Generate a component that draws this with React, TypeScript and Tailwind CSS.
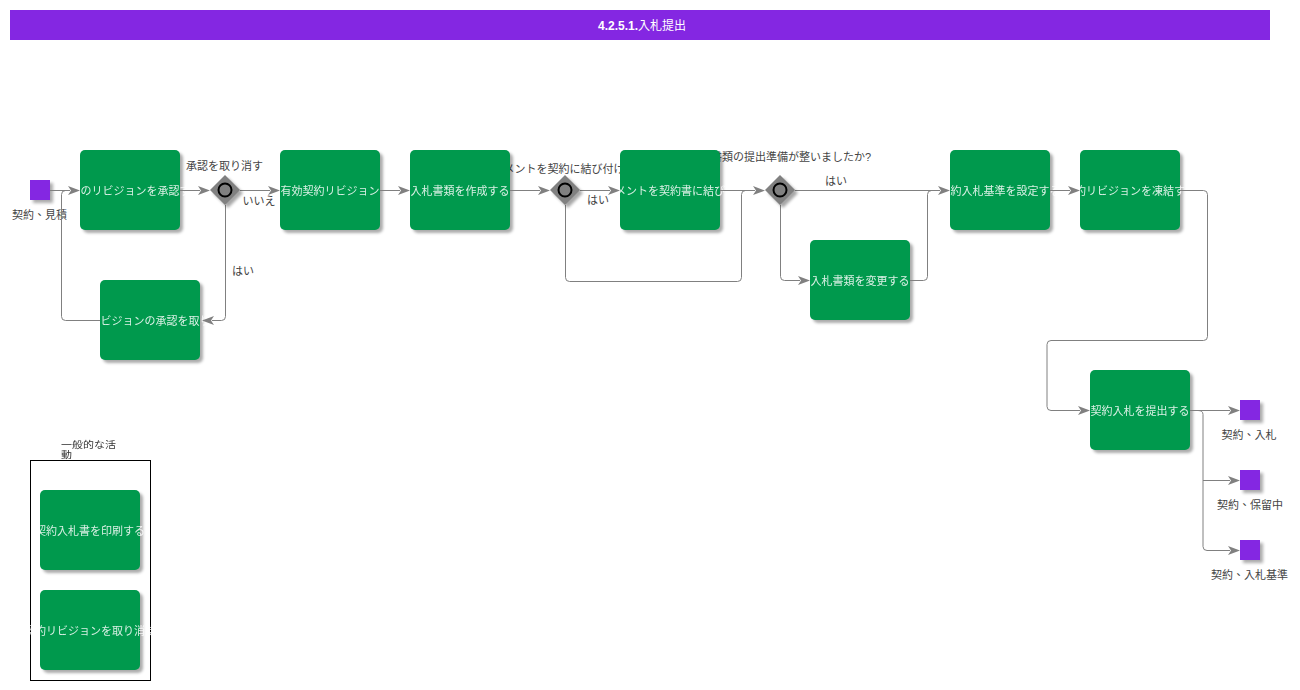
const font = "[font-family:'Liberation_Sans','Noto_Sans_CJK_JP',sans-serif]";
const fontTc = "[font-family:'Liberation_Sans','Noto_Sans_CJK_TC',sans-serif]";

const boxes = [
  { pos: "left-[80px] top-[150px]", text: "契約のリビジョンを承認する" },
  { pos: "left-[280px] top-[150px]", text: "有効契約リビジョン" },
  { pos: "left-[410px] top-[150px]", text: "入札書類を作成する" },
  { pos: "left-[620px] top-[150px]", text: "ドキュメントを契約書に結び付ける" },
  { pos: "left-[950px] top-[150px]", text: "契約入札基準を設定する" },
  { pos: "left-[1080px] top-[150px]", text: "契約リビジョンを凍結する" },
  { pos: "left-[100px] top-[280px]", text: "契約リビジョンの承認を取り消す" },
  { pos: "left-[810px] top-[240px]", text: "入札書類を変更する" },
  { pos: "left-[1090px] top-[370px]", text: "契約入札を提出する" },
  { pos: "left-[40px] top-[490px]", text: "契約入札書を印刷する" },
  { pos: "left-[40px] top-[590px]", text: "契約リビジョンを取り消す" },
];

const labels = [
  { pos: "left-[224.5px] top-[166px]", text: "承認を取り消す", cls: font },
  { pos: "left-[259px] top-[201px]", text: "いいえ", cls: font },
  { pos: "left-[243px] top-[271px]", text: "はい", cls: font },
  { pos: "left-[567px] top-[169px]", text: "ドキュメントを契約に結び付けますか?", cls: font },
  { pos: "left-[598px] top-[200px]", text: "はい", cls: font },
  { pos: "left-[780px] top-[157px]", text: "入札書類の提出準備が整いましたか?", cls: font },
  { pos: "left-[836px] top-[181px]", text: "はい", cls: font },
  { pos: "left-[39.5px] top-[215px]", text: "契約、見積", cls: fontTc },
  { pos: "left-[1249px] top-[435px]", text: "契約、入札", cls: fontTc },
  { pos: "left-[1250px] top-[505px]", text: "契約、保留中", cls: fontTc },
  { pos: "left-[1249.5px] top-[575px]", text: "契約、入札基準", cls: fontTc },
];

const squares = [
  "left-[30px] top-[180px]",
  "left-[1240px] top-[400px]",
  "left-[1240px] top-[470px]",
  "left-[1240px] top-[540px]",
];

const lines = [
  "M50 190.5H70",
  "M180 190.5H200",
  "M240 190.5H270",
  "M225.5 205V316.5Q225.5 320.5 221.5 320.5H212",
  "M100 320.5H65.5Q61.5 320.5 61.5 316.5V194.5Q61.5 190.5 65.5 190.5H70",
  "M380 190.5H400",
  "M510 190.5H540",
  "M580 190.5H610",
  "M720 190.5H755",
  "M565.5 205V277.5Q565.5 281.5 569.5 281.5H737.5Q741.5 281.5 741.5 277.5V194.5Q741.5 190.5 745.5 190.5H755",
  "M795 190.5H940",
  "M780.5 205V276.5Q780.5 280.5 784.5 280.5H800",
  "M910 280.5H923.5Q927.5 280.5 927.5 276.5V194.5Q927.5 190.5 931.5 190.5H940",
  "M1050 190.5H1070",
  "M1180 190.5H1203.5Q1207.5 190.5 1207.5 194.5V336.5Q1207.5 340.5 1203.5 340.5H1051Q1047 340.5 1047 344.5V406.5Q1047 410.5 1051 410.5H1080",
  "M1190 410.5H1230",
  "M1198 410.5Q1203 410.5 1203 414.5V546.5Q1203 550.5 1207 550.5H1230",
  "M1203 480.5H1230",
];

const heads: [number, number, number][] = [
  [80, 190.5, 1], [210, 190.5, 1], [280, 190.5, 1], [202, 320.5, -1], [410, 190.5, 1],
  [550, 190.5, 1], [620, 190.5, 1], [765, 190.5, 1], [950, 190.5, 1], [810, 280.5, 1],
  [1080, 190.5, 1], [1090, 410.5, 1], [1240, 410.5, 1], [1240, 480.5, 1], [1240, 550.5, 1],
];

const gateways = [225, 565, 780];

function Diagram() {
  return (
    <svg className="absolute left-0 top-0 h-[690px] w-[1300px]" viewBox="0 0 1300 690" fill="none">
      <defs>
        <filter id="blur" x="-30%" y="-30%" width="160%" height="160%">
          <feGaussianBlur stdDeviation="1.5" />
        </filter>
      </defs>
      {lines.map((d) => (
        <path key={d} d={d} stroke="#808080" strokeWidth="1" />
      ))}
      {heads.map(([x, y, dir]) => (
        <path
          key={`${x}-${y}`}
          d={`M${x} ${y}L${x - 12 * dir} ${y - 4.5}L${x - 9 * dir} ${y}L${x - 12 * dir} ${y + 4.5}Z`}
          fill="#808080"
        />
      ))}
      {gateways.map((x) => (
        <g key={x}>
          <path d={`M${x + 3} 178L${x + 18} 193L${x + 3} 208L${x - 12} 193Z`} fill="#000" opacity="0.35" filter="url(#blur)" />
          <path d={`M${x} 175L${x + 15} 190L${x} 205L${x - 15} 190Z`} fill="#808080" />
          <circle cx={x} cy="190" r="6.5" fill="#808080" stroke="#000" strokeWidth="2" />
        </g>
      ))}
    </svg>
  );
}

export default function App() {
  return (
    <div className={`relative h-[690px] w-[1300px] overflow-hidden bg-white pt-[10px] pl-[10px] ${font}`}>
      <div className="flex h-[30px] w-[1260px] items-center justify-center bg-[#8427e2] pl-[4px] pt-[2px] text-[12px] font-bold text-white">
        4.2.5.1.<span className="font-normal">入札提出</span>
      </div>

      {labels.map((l) => (
        <div
          key={l.pos}
          className={`absolute ${l.pos} ${l.cls} -translate-x-1/2 -translate-y-1/2 whitespace-nowrap text-[11px] leading-[14px] text-[#444444]`}
        >
          {l.text}
        </div>
      ))}

      <div className="absolute left-[30px] top-[460px] h-[221px] w-[121px] border border-black" />
      <div className="absolute left-[61px] top-[439px] w-[58px] text-[11px] leading-[11px] text-[#333333] [transform:scaleY(0.85)]">
        一般的な活動
      </div>

      {boxes.map((b) => (
        <div
          key={b.pos}
          className={`absolute ${b.pos} flex h-[80px] w-[100px] items-center justify-center rounded-[5px] bg-[#00994d] pt-[2px] text-[11px] text-white shadow-[3px_3px_3px_rgba(0,0,0,0.33)]`}
        >
          <span className="whitespace-nowrap opacity-85">{b.text}</span>
        </div>
      ))}

      {squares.map((s) => (
        <div key={s} className={`absolute ${s} h-[20px] w-[20px] bg-[#8427e2] shadow-[3px_3px_3px_rgba(0,0,0,0.33)]`} />
      ))}

      <Diagram />
    </div>
  );
}
